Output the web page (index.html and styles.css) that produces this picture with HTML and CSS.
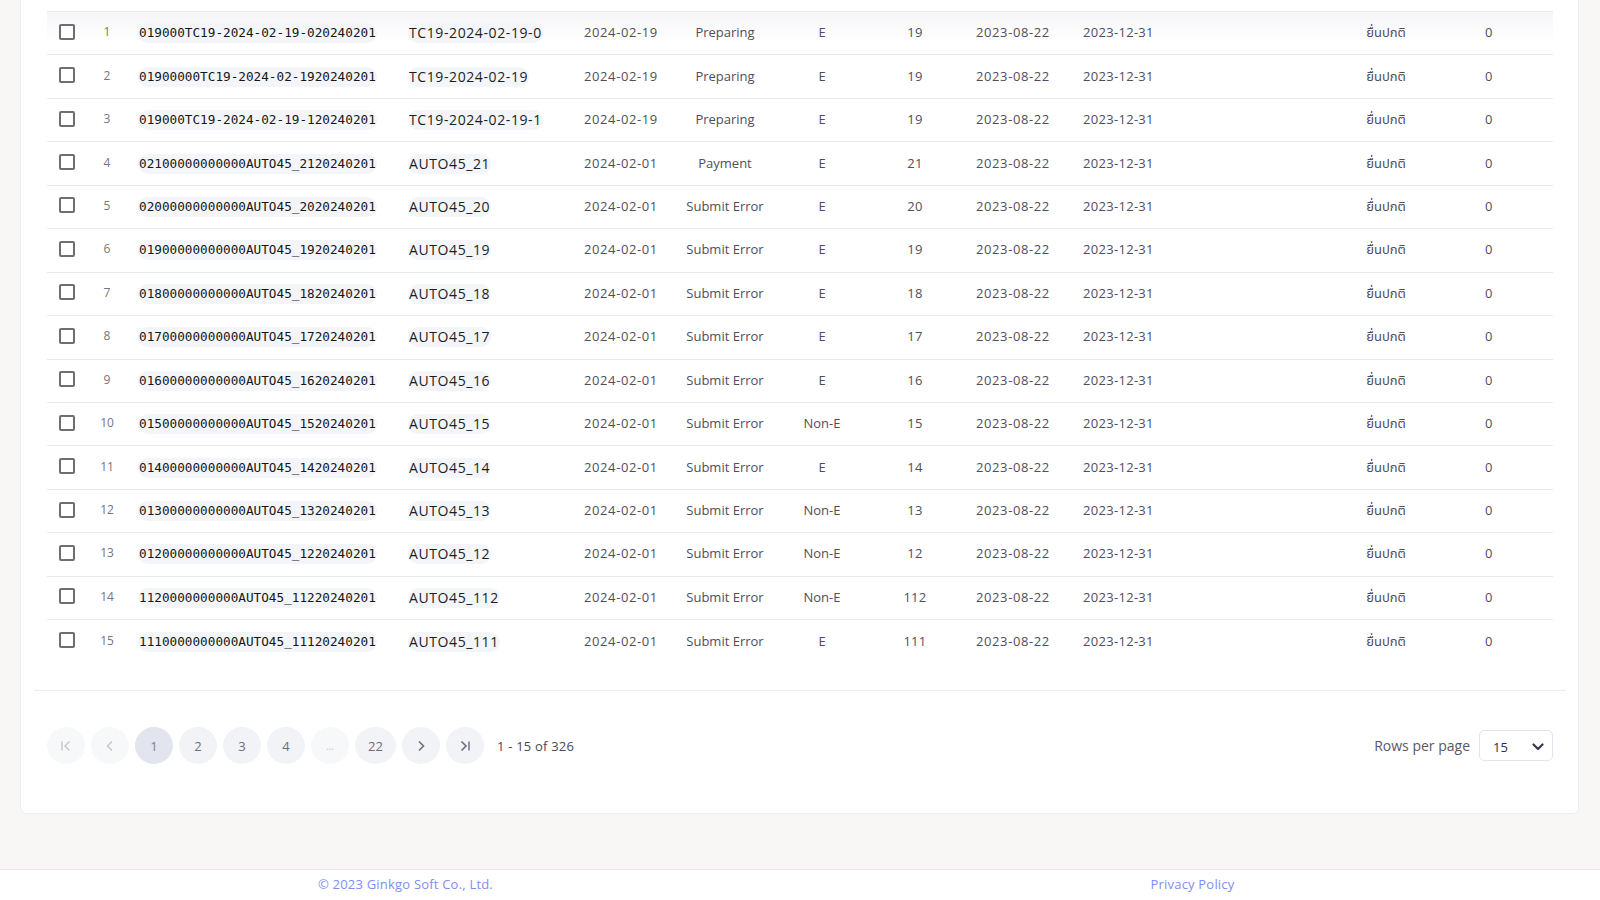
FILE: index.html
```html
<!DOCTYPE html>
<html lang="en">
<head>
<meta charset="utf-8">
<title>Documents</title>
<link rel="stylesheet" href="styles.css">
</head>
<body>
<div class="page">
  <main class="main">
    <section class="card">
      <div class="table-wrap">
        <table class="grid">
          <colgroup>
            <col class="c-check"><col class="c-idx"><col class="c-code"><col class="c-name"><col class="c-date"><col class="c-status"><col class="c-type"><col class="c-num"><col class="c-start"><col class="c-end"><col class="c-kind"><col class="c-zero">
          </colgroup>
          <tbody>
            <tr class="first"><td class="t-check"><span class="box"></span></td><td class="t-idx">1</td><td class="t-code"><span class="code">019000TC19-2024-02-19-020240201</span></td><td class="t-name"><span class="name">TC19-2024-02-19-0</span></td><td class="t-date">2024-02-19</td><td class="t-center">Preparing</td><td class="t-center">E</td><td class="t-center num">19</td><td class="t-start">2023-08-22</td><td class="t-end">2023-12-31</td><td class="t-center">ยื่นปกติ</td><td class="t-zero">0</td></tr>
            <tr><td class="t-check"><span class="box"></span></td><td class="t-idx">2</td><td class="t-code"><span class="code">01900000TC19-2024-02-1920240201</span></td><td class="t-name"><span class="name">TC19-2024-02-19</span></td><td class="t-date">2024-02-19</td><td class="t-center">Preparing</td><td class="t-center">E</td><td class="t-center num">19</td><td class="t-start">2023-08-22</td><td class="t-end">2023-12-31</td><td class="t-center">ยื่นปกติ</td><td class="t-zero">0</td></tr>
            <tr><td class="t-check"><span class="box"></span></td><td class="t-idx">3</td><td class="t-code"><span class="code">019000TC19-2024-02-19-120240201</span></td><td class="t-name"><span class="name">TC19-2024-02-19-1</span></td><td class="t-date">2024-02-19</td><td class="t-center">Preparing</td><td class="t-center">E</td><td class="t-center num">19</td><td class="t-start">2023-08-22</td><td class="t-end">2023-12-31</td><td class="t-center">ยื่นปกติ</td><td class="t-zero">0</td></tr>
            <tr><td class="t-check"><span class="box"></span></td><td class="t-idx">4</td><td class="t-code"><span class="code">02100000000000AUTO45_2120240201</span></td><td class="t-name"><span class="name">AUTO45_21</span></td><td class="t-date">2024-02-01</td><td class="t-center">Payment</td><td class="t-center">E</td><td class="t-center num">21</td><td class="t-start">2023-08-22</td><td class="t-end">2023-12-31</td><td class="t-center">ยื่นปกติ</td><td class="t-zero">0</td></tr>
            <tr><td class="t-check"><span class="box"></span></td><td class="t-idx">5</td><td class="t-code"><span class="code">02000000000000AUTO45_2020240201</span></td><td class="t-name"><span class="name">AUTO45_20</span></td><td class="t-date">2024-02-01</td><td class="t-center">Submit Error</td><td class="t-center">E</td><td class="t-center num">20</td><td class="t-start">2023-08-22</td><td class="t-end">2023-12-31</td><td class="t-center">ยื่นปกติ</td><td class="t-zero">0</td></tr>
            <tr><td class="t-check"><span class="box"></span></td><td class="t-idx">6</td><td class="t-code"><span class="code">01900000000000AUTO45_1920240201</span></td><td class="t-name"><span class="name">AUTO45_19</span></td><td class="t-date">2024-02-01</td><td class="t-center">Submit Error</td><td class="t-center">E</td><td class="t-center num">19</td><td class="t-start">2023-08-22</td><td class="t-end">2023-12-31</td><td class="t-center">ยื่นปกติ</td><td class="t-zero">0</td></tr>
            <tr><td class="t-check"><span class="box"></span></td><td class="t-idx">7</td><td class="t-code"><span class="code">01800000000000AUTO45_1820240201</span></td><td class="t-name"><span class="name">AUTO45_18</span></td><td class="t-date">2024-02-01</td><td class="t-center">Submit Error</td><td class="t-center">E</td><td class="t-center num">18</td><td class="t-start">2023-08-22</td><td class="t-end">2023-12-31</td><td class="t-center">ยื่นปกติ</td><td class="t-zero">0</td></tr>
            <tr><td class="t-check"><span class="box"></span></td><td class="t-idx">8</td><td class="t-code"><span class="code">01700000000000AUTO45_1720240201</span></td><td class="t-name"><span class="name">AUTO45_17</span></td><td class="t-date">2024-02-01</td><td class="t-center">Submit Error</td><td class="t-center">E</td><td class="t-center num">17</td><td class="t-start">2023-08-22</td><td class="t-end">2023-12-31</td><td class="t-center">ยื่นปกติ</td><td class="t-zero">0</td></tr>
            <tr><td class="t-check"><span class="box"></span></td><td class="t-idx">9</td><td class="t-code"><span class="code">01600000000000AUTO45_1620240201</span></td><td class="t-name"><span class="name">AUTO45_16</span></td><td class="t-date">2024-02-01</td><td class="t-center">Submit Error</td><td class="t-center">E</td><td class="t-center num">16</td><td class="t-start">2023-08-22</td><td class="t-end">2023-12-31</td><td class="t-center">ยื่นปกติ</td><td class="t-zero">0</td></tr>
            <tr><td class="t-check"><span class="box"></span></td><td class="t-idx">10</td><td class="t-code"><span class="code">01500000000000AUTO45_1520240201</span></td><td class="t-name"><span class="name">AUTO45_15</span></td><td class="t-date">2024-02-01</td><td class="t-center">Submit Error</td><td class="t-center">Non-E</td><td class="t-center num">15</td><td class="t-start">2023-08-22</td><td class="t-end">2023-12-31</td><td class="t-center">ยื่นปกติ</td><td class="t-zero">0</td></tr>
            <tr><td class="t-check"><span class="box"></span></td><td class="t-idx">11</td><td class="t-code"><span class="code">01400000000000AUTO45_1420240201</span></td><td class="t-name"><span class="name">AUTO45_14</span></td><td class="t-date">2024-02-01</td><td class="t-center">Submit Error</td><td class="t-center">E</td><td class="t-center num">14</td><td class="t-start">2023-08-22</td><td class="t-end">2023-12-31</td><td class="t-center">ยื่นปกติ</td><td class="t-zero">0</td></tr>
            <tr><td class="t-check"><span class="box"></span></td><td class="t-idx">12</td><td class="t-code"><span class="code">01300000000000AUTO45_1320240201</span></td><td class="t-name"><span class="name">AUTO45_13</span></td><td class="t-date">2024-02-01</td><td class="t-center">Submit Error</td><td class="t-center">Non-E</td><td class="t-center num">13</td><td class="t-start">2023-08-22</td><td class="t-end">2023-12-31</td><td class="t-center">ยื่นปกติ</td><td class="t-zero">0</td></tr>
            <tr><td class="t-check"><span class="box"></span></td><td class="t-idx">13</td><td class="t-code"><span class="code">01200000000000AUTO45_1220240201</span></td><td class="t-name"><span class="name">AUTO45_12</span></td><td class="t-date">2024-02-01</td><td class="t-center">Submit Error</td><td class="t-center">Non-E</td><td class="t-center num">12</td><td class="t-start">2023-08-22</td><td class="t-end">2023-12-31</td><td class="t-center">ยื่นปกติ</td><td class="t-zero">0</td></tr>
            <tr><td class="t-check"><span class="box"></span></td><td class="t-idx">14</td><td class="t-code"><span class="code">1120000000000AUTO45_11220240201</span></td><td class="t-name"><span class="name">AUTO45_112</span></td><td class="t-date">2024-02-01</td><td class="t-center">Submit Error</td><td class="t-center">Non-E</td><td class="t-center num">112</td><td class="t-start">2023-08-22</td><td class="t-end">2023-12-31</td><td class="t-center">ยื่นปกติ</td><td class="t-zero">0</td></tr>
            <tr class="last"><td class="t-check"><span class="box"></span></td><td class="t-idx">15</td><td class="t-code"><span class="code">1110000000000AUTO45_11120240201</span></td><td class="t-name"><span class="name">AUTO45_111</span></td><td class="t-date">2024-02-01</td><td class="t-center">Submit Error</td><td class="t-center">E</td><td class="t-center num">111</td><td class="t-start">2023-08-22</td><td class="t-end">2023-12-31</td><td class="t-center">ยื่นปกติ</td><td class="t-zero">0</td></tr>
          </tbody>
        </table>
      </div>
      <div class="divider"></div>
      <div class="pager">
        <div class="pages">
          <button class="pg disabled" aria-label="First page"><svg width="14" height="14" viewBox="0 0 14 14"><path d="M3 2.5v9" stroke="currentColor" stroke-width="1.4" fill="none"/><path d="M10.5 2.5L6 7l4.5 4.5" stroke="currentColor" stroke-width="1.4" fill="none"/></svg></button>
          <button class="pg disabled" aria-label="Previous page"><svg width="14" height="14" viewBox="0 0 14 14"><path d="M9 2.5L4.5 7 9 11.5" stroke="currentColor" stroke-width="1.4" fill="none"/></svg></button>
          <button class="pg active">1</button>
          <button class="pg">2</button>
          <button class="pg">3</button>
          <button class="pg">4</button>
          <button class="pg disabled dots">…</button>
          <button class="pg wide">22</button>
          <button class="pg" aria-label="Next page"><svg width="14" height="14" viewBox="0 0 14 14"><path d="M5 2.5L9.5 7 5 11.5" stroke="currentColor" stroke-width="1.6" fill="none"/></svg></button>
          <button class="pg" aria-label="Last page"><svg width="14" height="14" viewBox="0 0 14 14"><path d="M3.5 2.5L8 7l-4.5 4.5" stroke="currentColor" stroke-width="1.6" fill="none"/><path d="M11 2.5v9" stroke="currentColor" stroke-width="1.4" fill="none"/></svg></button>
          <span class="range">1 - 15 of 326</span>
        </div>
        <div class="rpp">
          <span class="rpp-label">Rows per page</span>
          <div class="select"><span>15</span><svg width="12" height="8" viewBox="0 0 12 8"><path d="M1.5 1.5L6 6l4.5-4.5" stroke="#3b3a4a" stroke-width="2.2" fill="none" stroke-linecap="round" stroke-linejoin="round"/></svg></div>
        </div>
      </div>
    </section>
  </main>
  <footer class="footer">
    <a class="foot-link">© 2023 Ginkgo Soft Co., Ltd.</a>
    <a class="foot-link right">Privacy Policy</a>
  </footer>
</div>
</body>
</html>
```
FILE: styles.css
```css
* { box-sizing: border-box; }
html, body { margin: 0; padding: 0; }
body {
  background: #f8f7f6;
  font-family: "Open Sans", "Noto Sans", "Noto Sans Thai", sans-serif;
  color: #514d5c;
  font-size: 13px;
}
.page { width: 1600px; height: 900px; overflow: hidden; display: flex; flex-direction: column; }
.main { height: 869px; padding: 0 21px 0 20px; }
.card {
  background: #fff;
  border: 1px solid #eceef2;
  border-top: none;
  border-radius: 0 0 6px 6px;
  height: 814px;
  display: flex;
  flex-direction: column;
}
.table-wrap { padding: 11px 25px 0 26px; }
.grid {
  width: 1506px;
  table-layout: fixed;
  border-collapse: collapse;
  border-top: 1px solid #e9e8ef;
}
.c-check { width: 43px; }
.c-idx { width: 34px; }
.c-code { width: 271px; }
.c-name { width: 175px; }
.c-date { width: 95px; }
.c-status { width: 120px; }
.c-type { width: 74px; }
.c-num { width: 112px; }
.c-start { width: 104px; }
.c-end { width: 225px; }
.c-kind { width: 172px; }
.c-zero { width: 81px; }
.grid td {
  height: 43.44px;
  padding: 0;
  border-bottom: 1px solid #e9e8ef;
  vertical-align: middle;
  white-space: nowrap;
  line-height: 18px;
  padding-bottom: 2px;
}
.grid tr.last td { border-bottom: none; }
.grid tr.first td { background: linear-gradient(#f5f5f7, #ffffff 70%); }
.t-check { padding-left: 12px !important; }
.box {
  display: block;
  width: 16px; height: 16px;
  border: 2px solid #6e6e6e;
  border-radius: 2px;
  margin-top: -1px;
}
.t-idx { text-align: center; font-size: 12px; color: #77737f; }
.t-code { padding-left: 14px !important; }
.code {
  display: inline-block;
  font-family: "DejaVu Sans Mono", "Liberation Mono", monospace;
  font-size: 12.7px;
  color: #161616;
  background: #f3f5f9;
  border-radius: 10px;
  padding: 1px;
  line-height: 18px;
  margin-top: 2px;
}
.t-name { padding-left: 13px !important; }
.name {
  display: inline-block;
  font-size: 14px;
  letter-spacing: 0.6px;
  color: #1d1d24;
  background: #f3f5f9;
  border-radius: 10px;
  padding: 1px 1px;
  line-height: 18px;
  margin-top: 2px;
}
.t-date { padding-left: 14px !important; letter-spacing: 0.6px; }
.t-center { text-align: center; }
.num { letter-spacing: 0.3px; }
.t-start { padding-left: 5px !important; letter-spacing: 0.6px; }
.t-end { padding-left: 8px !important; letter-spacing: 0.3px; }
.t-zero { padding-left: 13px !important; }
.divider { height: 1px; background: #eceef2; margin: 27px 12px 0 13px; }
.pager {
  display: flex;
  align-items: center;
  justify-content: space-between;
  padding: 36px 25px 0 26px;
}
.pages { display: flex; align-items: center; gap: 6px; }
.pg {
  width: 38px; height: 37px;
  border-radius: 50%;
  border: none;
  background: #f1f3f7;
  color: #6a6e80;
  font-family: inherit;
  font-size: 13px;
  padding: 0;
  display: flex; align-items: center; justify-content: center;
}
.pg.wide { width: 41px; }
.pg.disabled { background: #f7f8fa; color: #c2c5cf; }
.pg.dots { font-size: 10px; }
.pg.active { background: #e2e4ee; color: #7a7e90; }
.range { margin-left: 7px; color: #4a4858; font-size: 13px; letter-spacing: 0.2px; }
.rpp { display: flex; align-items: center; gap: 9px; }
.rpp-label { color: #5a5868; font-size: 14px; }
.select {
  width: 74px; height: 31px;
  border: 1px solid #e4e3ee;
  border-radius: 5px;
  display: flex; align-items: center; justify-content: space-between;
  padding: 2px 8px 0 13px;
  color: #2f2e3a;
  font-size: 13px;
}
.footer {
  height: 31px;
  background: #fff;
  border-top: 1px solid #e8eaee;
  display: grid;
  grid-template-columns: 1fr 1fr;
  align-items: center;
  padding: 0 14px 2px 12px;
}
.foot-link { text-align: center; color: #7e8ef4; font-size: 13px; letter-spacing: 0.2px; }
```
